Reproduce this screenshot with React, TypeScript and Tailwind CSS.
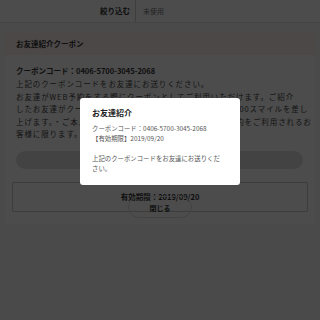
import React from 'react';

const jp = "font-['Noto_Sans_CJK_JP','Noto_Sans',sans-serif]";

export default function App() {
  return (
    <div className={`relative w-[320px] h-[320px] overflow-hidden bg-[#f9f9f9] text-[#333] ${jp}`}>
      {/* filter bar */}
      <div className="flex h-[23px] bg-white border-b border-[#e6e6e6]">
        <div className="w-[135px] flex items-center justify-end pr-[5px] text-[7.5px] font-bold">絞り込む</div>
        <div className="w-px bg-[#cfcfcf]" />
        <div className="flex-1 flex items-center pl-[7px] text-[7px] text-[#777]">未使用</div>
      </div>

      {/* coupon card */}
      <div className="mx-[5px] mt-[10px] bg-white">
        <div className="h-[22px] flex items-center px-[11px] bg-[#fff0f0] text-[7.5px] font-bold">お友達紹介クーポン</div>
        <div className="px-[11px] pt-[10px] pb-[12px]">
          <div className="text-[7.5px] leading-[12px] font-bold">クーポンコード：0406-5700-3045-2068</div>
          <div className="mt-[1px] text-[7.5px] leading-[12.5px] tracking-[0.9px] text-[#444] whitespace-nowrap">
            <div>上記のクーポンコードをお友達にお送りください。</div>
            <div>お友達がWEB予約をする際にクーポンとしてご利用いただけます。ご紹介</div>
            <div>したお友達がクーポンをご利用された場合、ご紹介者様に100スマイルを差し</div>
            <div>上げます。・ご本人様同士のご利用はできません。・WEB予約をご利用されるお</div>
            <div>客様に限ります。</div>
          </div>
          <div className="mt-[10px] mr-[1px] h-[18px] rounded-full bg-[#e2e2e2]" />
          <div className="mt-[13px] -mx-[4px] h-[30px] rounded-[2px] border border-[#c8c8c8] pt-[8px] text-center text-[7.5px] font-bold leading-[12px]">
            有効期限：2019/09/20
          </div>
        </div>
      </div>

      <button className="absolute left-[128px] top-[196px] w-[64px] h-[22px] rounded-full border border-[#e0e0e0] pt-[2px] text-[7px] font-bold text-[#333]">
        閉じる
      </button>

      {/* dim overlay */}
      <div className="absolute inset-0 bg-black/70" />

      {/* modal */}
      <div className="absolute left-[80px] top-[98px] w-[160px] h-[87px] rounded-[3px] bg-white pl-[12px] pr-[14px] pt-[10px]">
        <div className="text-[8px] leading-[10px] font-bold text-[#222]">お友達紹介</div>
        <div className="mt-[6px] text-[6.4px] leading-[10px] text-[#555]">
          <div className="whitespace-nowrap">クーポンコード：0406-5700-3045-2068</div>
          <div>【有効期限】2019/09/20</div>
          <div className="h-[10px]" />
          <div>上記のクーポンコードをお友達にお送りください。</div>
        </div>
      </div>
    </div>
  );
}
